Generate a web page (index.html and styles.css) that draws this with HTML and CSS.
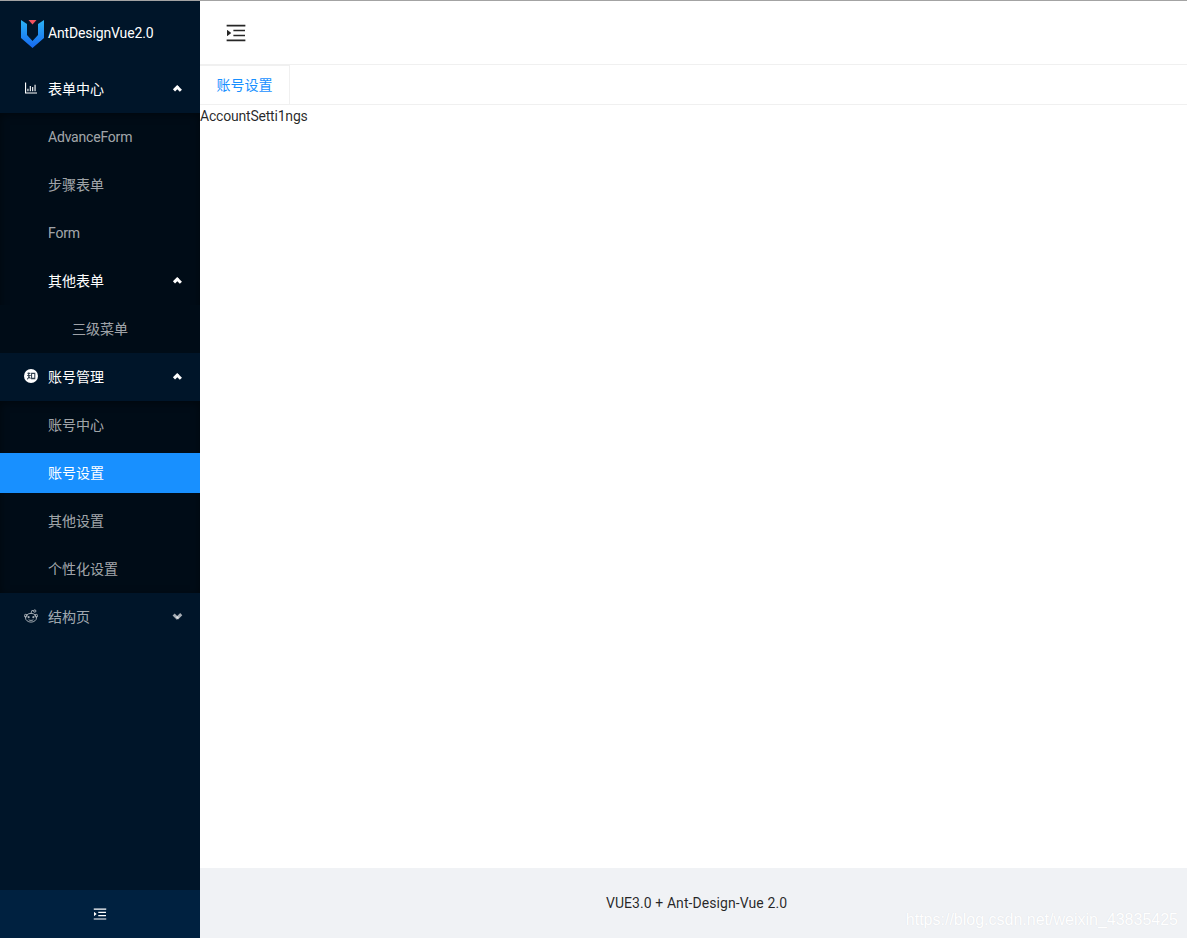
FILE: index.html
```html
<!DOCTYPE html>
<html>
<head>
  <meta charset="UTF-8">
  <title>AntDesignVue2.0</title>
  <link rel="stylesheet" href="styles.css">
</head>
<body>
  <div class="app">
    <aside class="sider">
      <div class="logo">
        <svg class="logo-mark" viewBox="0 0 23 28">
          <defs>
            <linearGradient id="logoBlue" x1="0" y1="0" x2="0" y2="1">
              <stop offset="0" stop-color="#2bb3f5"/>
              <stop offset="1" stop-color="#1668f0"/>
            </linearGradient>
          </defs>
          <path fill="url(#logoBlue)" d="M0 0l6 4v11l5.500 6 5.500-6V4l6-4v18l-11.500 10L0 18z"/>
          <path fill="#f0525f" d="M7.500 0h8l-4 4.500z"/>
        </svg>
        <span class="logo-text">AntDesignVue2.0</span>
      </div>
      <nav class="menu">
        <div class="item top open">
          <svg class="icon" viewBox="0 0 1024 1024"><path d="M888 792H200V168c0-4.400-3.600-8-8-8h-56c-4.400 0-8 3.600-8 8v688c0 4.400 3.600 8 8 8h752c4.400 0 8-3.600 8-8v-56c0-4.400-3.600-8-8-8zm-600-80h56c4.400 0 8-3.600 8-8V560c0-4.400-3.600-8-8-8h-56c-4.400 0-8 3.600-8 8v144c0 4.400 3.600 8 8 8zm152 0h56c4.400 0 8-3.600 8-8V384c0-4.400-3.600-8-8-8h-56c-4.400 0-8 3.600-8 8v320c0 4.400 3.600 8 8 8zm152 0h56c4.400 0 8-3.600 8-8V462c0-4.400-3.600-8-8-8h-56c-4.400 0-8 3.600-8 8v242c0 4.400 3.600 8 8 8zm152 0h56c4.400 0 8-3.600 8-8V304c0-4.400-3.600-8-8-8h-56c-4.400 0-8 3.600-8 8v400c0 4.400 3.600 8 8 8z"/></svg>
          <span>表单中心</span>
          <i class="arrow up"></i>
        </div>
        <div class="sub">
          <div class="item latin">AdvanceForm</div>
          <div class="item">步骤表单</div>
          <div class="item latin">Form</div>
          <div class="item open">
            <span>其他表单</span>
            <i class="arrow up"></i>
          </div>
          <div class="sub inner">
            <div class="item deep">三级菜单</div>
          </div>
        </div>
        <div class="item top open">
          <svg class="icon round" viewBox="0 0 24 24">
            <circle cx="12" cy="12" r="12"/>
            <path class="glyph" d="M6 7.500h5M8 6v5M5.500 11h6M8.500 11c0 3-1 5-3 6.500M8.500 13l2.500 3.500M13 7.500h5.500v9H13zM13 16h5.500"/>
          </svg>
          <span>账号管理</span>
          <i class="arrow up"></i>
        </div>
        <div class="sub">
          <div class="item">账号中心</div>
          <div class="item active">账号设置</div>
          <div class="item">其他设置</div>
          <div class="item">个性化设置</div>
        </div>
        <div class="item top">
          <svg class="icon round" viewBox="0 0 24 24">
            <g class="line">
              <ellipse cx="12" cy="15" rx="9.500" ry="7.500"/>
              <circle cx="3" cy="11.500" r="2.400"/>
              <circle cx="21" cy="11.500" r="2.400"/>
              <circle cx="18.500" cy="3.500" r="2"/>
              <path d="M12 7.500l1.500-5 3 .7M8 18.500c2.500 1.400 5.500 1.400 8 0"/>
            </g>
            <circle cx="8" cy="14" r="1.800"/>
            <circle cx="16" cy="14" r="1.800"/>
          </svg>
          <span>结构页</span>
          <i class="arrow down"></i>
        </div>
      </nav>
      <div class="collapse">
        <svg class="fold" viewBox="0 0 1024 1024"><path d="M408 442h480c4.400 0 8-3.600 8-8v-56c0-4.400-3.600-8-8-8H408c-4.400 0-8 3.600-8 8v56c0 4.400 3.600 8 8 8zm-8 204c0 4.400 3.600 8 8 8h480c4.400 0 8-3.600 8-8v-56c0-4.400-3.600-8-8-8H408c-4.400 0-8 3.600-8 8v56zm504-486H120c-4.400 0-8 3.600-8 8v56c0 4.400 3.600 8 8 8h784c4.400 0 8-3.600 8-8v-56c0-4.400-3.600-8-8-8zm0 632H120c-4.400 0-8 3.600-8 8v56c0 4.400 3.600 8 8 8h784c4.400 0 8-3.600 8-8v-56c0-4.400-3.600-8-8-8zM142.400 642.100L298.700 519a8.840 8.840 0 000-13.900L142.400 381.900c-5.800-4.600-14.400-.5-14.400 6.900v246.300a8.900 8.900 0 0014.400 7z"/></svg>
      </div>
    </aside>
    <div class="main">
      <header class="header">
        <svg class="fold" viewBox="0 0 1024 1024"><path d="M408 442h480c4.400 0 8-3.600 8-8v-56c0-4.400-3.600-8-8-8H408c-4.400 0-8 3.600-8 8v56c0 4.400 3.600 8 8 8zm-8 204c0 4.400 3.600 8 8 8h480c4.400 0 8-3.600 8-8v-56c0-4.400-3.600-8-8-8H408c-4.400 0-8 3.600-8 8v56zm504-486H120c-4.400 0-8 3.600-8 8v56c0 4.400 3.600 8 8 8h784c4.400 0 8-3.600 8-8v-56c0-4.400-3.600-8-8-8zm0 632H120c-4.400 0-8 3.600-8 8v56c0 4.400 3.600 8 8 8h784c4.400 0 8-3.600 8-8v-56c0-4.400-3.600-8-8-8zM142.400 642.100L298.700 519a8.840 8.840 0 000-13.900L142.400 381.900c-5.800-4.600-14.400-.5-14.400 6.900v246.300a8.900 8.900 0 0014.400 7z"/></svg>
      </header>
      <div class="tabs">
        <div class="tab">账号设置</div>
      </div>
      <div class="content">AccountSetti1ngs</div>
      <footer class="footer">
        <span>VUE3.0 + Ant-Design-Vue 2.0</span>
        <span class="watermark">https://blog.csdn.net/weixin_43835425</span>
      </footer>
    </div>
  </div>
</body>
</html>
```

FILE: styles.css
```css
* {
  box-sizing: border-box;
}
body {
  margin: 0;
  background: #fff;
  color: rgba(0, 0, 0, 0.85);
  font-family: Roboto, "Noto Sans CJK SC", sans-serif;
  font-size: 14px;
}
.app {
  display: flex;
  height: 938px;
  border-top: 1px solid #a3a3a3;
  overflow: hidden;
}
.sider {
  display: flex;
  flex-direction: column;
  width: 200px;
  flex-shrink: 0;
  background: #001529;
  color: rgba(255, 255, 255, 0.65);
}
.logo {
  display: flex;
  align-items: center;
  gap: 4px;
  height: 64px;
  padding-left: 21px;
  color: #fff;
}
.logo-mark {
  width: 23px;
  height: 28px;
  margin-top: 2px;
}
.logo-text {
  letter-spacing: -0.14px;
}
.menu {
  flex: 1;
}
.item {
  display: flex;
  align-items: center;
  height: 48px;
  padding: 0 16px 2px 48px;
}
.item.latin {
  padding-bottom: 0;
  letter-spacing: -0.2px;
}
.item.top {
  padding-left: 23px;
}
.item.open {
  color: #fff;
}
.item.deep {
  padding-left: 72px;
}
.item.active {
  height: 40px;
  margin: 4px 0;
  background: #1890ff;
  color: #fff;
}
.sub {
  background: #000c17;
  box-shadow: inset 0 2px 8px rgba(0, 0, 0, 0.45);
}
.sub.inner {
  box-shadow: none;
}
.icon {
  width: 16px;
  height: 16px;
  margin-right: 9px;
  fill: currentColor;
}
.icon.round {
  width: 14px;
  height: 14px;
  margin-left: 1px;
  margin-right: 10px;
}
.icon .glyph {
  fill: none;
  stroke: #33414f;
  stroke-width: 1.800;
}
.icon .line {
  fill: none;
  stroke: currentColor;
  stroke-width: 1.600;
}
.arrow {
  position: relative;
  width: 10px;
  height: 10px;
  margin-left: auto;
  margin-right: 2px;
}
.arrow::before,
.arrow::after {
  content: "";
  position: absolute;
  top: 4px;
  width: 5.500px;
  height: 2.500px;
  background: currentColor;
}
.arrow::before {
  left: 0.500px;
}
.arrow::after {
  right: 0.500px;
}
.arrow.up::before,
.arrow.down::after {
  transform: rotate(-45deg);
}
.arrow.up::after,
.arrow.down::before {
  transform: rotate(45deg);
}
.collapse {
  display: flex;
  align-items: center;
  justify-content: center;
  height: 48px;
  background: #002140;
  color: #fff;
}
.fold {
  width: 16px;
  height: 16px;
  fill: currentColor;
}
.main {
  flex: 1;
  display: flex;
  flex-direction: column;
  min-width: 0;
}
.header {
  display: flex;
  align-items: center;
  height: 64px;
  padding-left: 24px;
  flex-shrink: 0;
  border-bottom: 1px solid #f0f0f0;
}
.header .fold {
  width: 24px;
  height: 24px;
  margin-top: 1px;
}
.tabs {
  height: 40px;
  flex-shrink: 0;
  border-bottom: 1px solid #f0f0f0;
}
.tab {
  display: flex;
  align-items: center;
  justify-content: center;
  width: 90px;
  height: 39px;
  padding-bottom: 2px;
  border-top: 1px solid #f0f0f0;
  border-right: 1px solid #f0f0f0;
  color: #1890ff;
}
.content {
  flex: 1;
  padding-top: 3px;
  letter-spacing: -0.2px;
}
.footer {
  position: relative;
  display: flex;
  align-items: center;
  justify-content: center;
  height: 70px;
  flex-shrink: 0;
  padding-left: 6px;
  letter-spacing: 0.08px;
  background: #f0f2f5;
}
.watermark {
  position: absolute;
  right: 9px;
  bottom: 9px;
  color: #fff;
  font-family: "Liberation Sans", sans-serif;
  font-size: 16px;
  letter-spacing: 0;
  text-shadow: 0 0 1px #d9dbe0;
}
```
